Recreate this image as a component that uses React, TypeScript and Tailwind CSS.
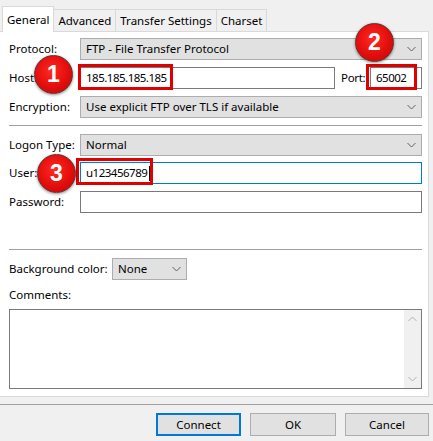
import React from 'react';

function Chevron({ up = false, color = '#606060' }: { up?: boolean; color?: string }) {
  return (
    <svg width="9" height="6" viewBox="0 0 9 6" className="shrink-0">
      <polyline
        points={up ? '0.5,5 4.5,1 8.5,5' : '0.5,1 4.5,5 8.5,1'}
        fill="none"
        stroke={color}
        strokeWidth="1"
      />
    </svg>
  );
}

function Select({ value, className = '' }: { value: string; className?: string }) {
  return (
    <div
      className={`flex h-[22px] items-center justify-between border border-[#adadad] bg-[#e1e1e1] pl-[5px] pr-[5px] ${className}`}
    >
      <span>{value}</span>
      <Chevron />
    </div>
  );
}

function Input({ value, focused = false, caret = false, className = '' }: { value?: string; focused?: boolean; caret?: boolean; className?: string }) {
  return (
    <div
      className={`flex h-[22px] items-center border bg-white pl-[5px] ${focused ? 'border-[#0078d7]' : 'border-[#7a7a7a]'} ${className}`}
    >
      <span className="tracking-[-0.5px]">{value}</span>
      {caret && <span className="ml-[2px] h-[15px] w-px bg-black" />}
    </div>
  );
}

function Row({ label, children, className = '' }: { label: string; children: React.ReactNode; className?: string }) {
  return (
    <div className={`flex items-center ${className}`}>
      <span className="w-[71px] shrink-0">{label}</span>
      {children}
    </div>
  );
}

/** numbered red marker drawn over the form */
function Marker({ n, className }: { n: number; className: string }) {
  return (
    <div
      className={`absolute flex h-[39px] w-[39px] items-center justify-center rounded-full border-[1.5px] border-[#5a3030] bg-[radial-gradient(circle_at_45%_40%,#ff2a1f,#e30d0d_55%,#b80808)] shadow-[0_1px_3px_rgba(0,0,0,0.45)] ${className}`}
    >
      <span className="font-['Liberation_Sans',Arial,sans-serif] text-[23px] leading-none font-bold text-white">
        {n}
      </span>
    </div>
  );
}

function Tab({ label, active = false }: { label: string; active?: boolean }) {
  return active ? (
    <div className="relative z-10 -mb-px flex h-[26px] items-center border border-b-0 border-[#d9d9d9] bg-white px-[4px]">
      {label}
    </div>
  ) : (
    <div className="-ml-px flex h-[22px] items-center border border-b-0 border-[#d9d9d9] bg-[#f0f0f0] px-[4px]">
      {label}
    </div>
  );
}

export default function App() {
  return (
    <div className="relative h-[441px] w-[433px] overflow-hidden bg-[#f0f0f0] font-['Noto_Sans','Segoe_UI',sans-serif] text-[11.5px] leading-none text-black">
      {/* tabs */}
      <div className="flex h-[31px] items-end pl-[2px]">
        <Tab label="General" active />
        <Tab label="Advanced" />
        <Tab label="Transfer Settings" />
        <Tab label="Charset" />
      </div>

      {/* page */}
      <div className="flex h-[366px] w-[429px] flex-col border border-l-0 border-[#d9d9d9] bg-white pr-[6px] pl-[9px]">
        <Row label="Protocol:" className="mt-[6px]">
          <Select value="FTP - File Transfer Protocol" className="flex-1" />
        </Row>
        <Row label="Host:" className="mt-[7px]">
          <Input value="185.185.185.185" className="flex-1" />
          <span className="ml-[6px] w-[29px] tracking-[-0.3px]">Port:</span>
          <Input value="65002" className="w-[52px]" />
        </Row>
        <Row label="Encryption:" className="mt-[7px]">
          <Select value="Use explicit FTP over TLS if available" className="flex-1" />
        </Row>
        <div className="mt-[7px] h-px bg-[#a0a0a0]" />
        <Row label="Logon Type:" className="mt-[8px]">
          <Select value="Normal" className="flex-1" />
        </Row>
        <Row label="User:" className="mt-[6px]">
          <Input value="u123456789" focused caret className="flex-1" />
        </Row>
        <Row label="Password:" className="mt-[7px]">
          <Input className="flex-1" />
        </Row>
        <div className="mt-[36px] h-px bg-[#a0a0a0]" />
        <div className="mt-[8px] flex items-center">
          <span className="w-[103px]">Background color:</span>
          <Select value="None" className="w-[75px]" />
        </div>
        <div className="mt-[9px]">Comments:</div>
        <div className="mt-[8px] flex h-[80px] border border-[#7a7a7a] bg-white">
          <div className="flex-1" />
          <div className="flex w-[17px] flex-col items-center justify-between bg-[#f0f0f0] py-[6px]">
            <Chevron up color="#b0b0b0" />
            <Chevron color="#b0b0b0" />
          </div>
        </div>
      </div>

      {/* buttons */}
      <div className="mt-[7px] border-t border-[#a0a0a0]" />
      <div className="mt-[8px] flex justify-end gap-[9px] pr-[4px]">
        <div className="flex h-[23px] w-[85px] items-center justify-center border-2 border-[#0078d7] bg-[#e1e1e1]">
          Connect
        </div>
        <div className="flex h-[23px] w-[86px] items-center justify-center border border-[#adadad] bg-[#e1e1e1]">
          OK
        </div>
        <div className="flex h-[23px] w-[84px] items-center justify-center border border-[#adadad] bg-[#e1e1e1]">
          Cancel
        </div>
      </div>

      {/* annotations */}
      <div className="pointer-events-none absolute top-[64px] left-[78px] h-[26px] w-[95px] border-[3px] border-[#e00000]" />
      <div className="pointer-events-none absolute top-[64px] left-[366px] h-[26px] w-[51px] border-[3px] border-[#e00000]" />
      <div className="pointer-events-none absolute top-[158px] left-[76px] h-[27px] w-[77px] border-[3px] border-[#e00000]" />
      <Marker n={1} className="top-[55px] left-[34px]" />
      <Marker n={2} className="top-[23px] left-[355px]" />
      <Marker n={3} className="top-[154px] left-[37px]" />
    </div>
  );
}
